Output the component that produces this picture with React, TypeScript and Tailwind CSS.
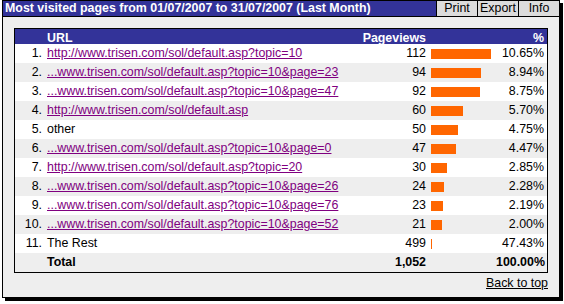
import React from "react";

type Row = {
  n: string;
  label: string;
  link: boolean;
  views: number;
  pct: string;
};

const rows: Row[] = [
  { n: "1.", label: "http://www.trisen.com/sol/default.asp?topic=10", link: true, views: 112, pct: "10.65%" },
  { n: "2.", label: "...www.trisen.com/sol/default.asp?topic=10&page=23", link: true, views: 94, pct: "8.94%" },
  { n: "3.", label: "...www.trisen.com/sol/default.asp?topic=10&page=47", link: true, views: 92, pct: "8.75%" },
  { n: "4.", label: "http://www.trisen.com/sol/default.asp", link: true, views: 60, pct: "5.70%" },
  { n: "5.", label: "other", link: false, views: 50, pct: "4.75%" },
  { n: "6.", label: "...www.trisen.com/sol/default.asp?topic=10&page=0", link: true, views: 47, pct: "4.47%" },
  { n: "7.", label: "http://www.trisen.com/sol/default.asp?topic=20", link: true, views: 30, pct: "2.85%" },
  { n: "8.", label: "...www.trisen.com/sol/default.asp?topic=10&page=26", link: true, views: 24, pct: "2.28%" },
  { n: "9.", label: "...www.trisen.com/sol/default.asp?topic=10&page=76", link: true, views: 23, pct: "2.19%" },
  { n: "10.", label: "...www.trisen.com/sol/default.asp?topic=10&page=52", link: true, views: 21, pct: "2.00%" },
];

const cols = "grid grid-cols-[29px_314px_70px_68px_51px] items-center";

export default function App() {
  return (
    <div className="bg-white min-h-screen pl-[2px] font-['Liberation_Sans',Arial,sans-serif] text-[12.4px] text-black">
      <div className="w-[558px] h-[298px] border border-black shadow-[3px_3px_0_#000] bg-[#eeeeee] flex flex-col">
        {/* title bar */}
        <div className="flex h-[16px] border-b border-black bg-[#333399] shrink-0">
          <div className="flex-1 pl-[2px] text-white font-bold leading-[15px] whitespace-nowrap">
            Most visited pages from 01/07/2007 to 31/07/2007 (Last Month)
          </div>
          {["Print", "Export", "Info"].map((b) => (
            <div
              key={b}
              className="w-[41px] border-l border-black bg-[#dcdcdc] text-center leading-[15px]"
            >
              {b}
            </div>
          ))}
        </div>

        <div className="px-[11px] pt-[11px]">
          <div className="border border-black bg-white">
            <div className={`${cols} h-[15px] bg-[#333399] text-white font-bold`}>
              <div />
              <div className="pl-[3px]">URL</div>
              <div className="text-right pr-[2px]">Pageviews</div>
              <div />
              <div className="text-right pr-[3px]">%</div>
            </div>

            {rows.map((r, i) => (
              <div key={r.n} className={`${cols} h-[19px] ${i % 2 ? "bg-[#eeeeee]" : "bg-white"}`}>
                <div className="text-right pr-[2px]">{r.n}</div>
                <div className="pl-[3px] whitespace-nowrap">
                  {r.link ? (
                    <a href="#" className="text-[#800080] underline">
                      {r.label}
                    </a>
                  ) : (
                    r.label
                  )}
                </div>
                <div className="text-right pr-[2px]">{r.views}</div>
                <div className="pl-[3px] flex items-center">
                  <span className="block h-[10px] bg-[#ff6600]" style={{ width: Math.round((r.views * 60) / 112) }} />
                </div>
                <div className="text-right pr-[3px]">{r.pct}</div>
              </div>
            ))}

            <div className={`${cols} h-[19px] bg-white`}>
              <div className="text-right pr-[2px]">11.</div>
              <div className="pl-[3px]">The Rest</div>
              <div className="text-right pr-[2px]">499</div>
              <div className="pl-[3px] flex items-center">
                <span className="block h-[10px] w-[1px] bg-[#ff6600]" />
              </div>
              <div className="text-right pr-[3px]">47.43%</div>
            </div>

            <div className={`${cols} h-[19px] bg-[#eeeeee] font-bold`}>
              <div />
              <div className="pl-[3px]">Total</div>
              <div className="text-right pr-[2px]">1,052</div>
              <div />
              <div className="text-right pr-[3px]">100.00%</div>
            </div>
          </div>

          <div className="flex justify-end mt-[1px]">
            <a href="#" className="text-black underline">
              Back to top
            </a>
          </div>
        </div>
      </div>
    </div>
  );
}
